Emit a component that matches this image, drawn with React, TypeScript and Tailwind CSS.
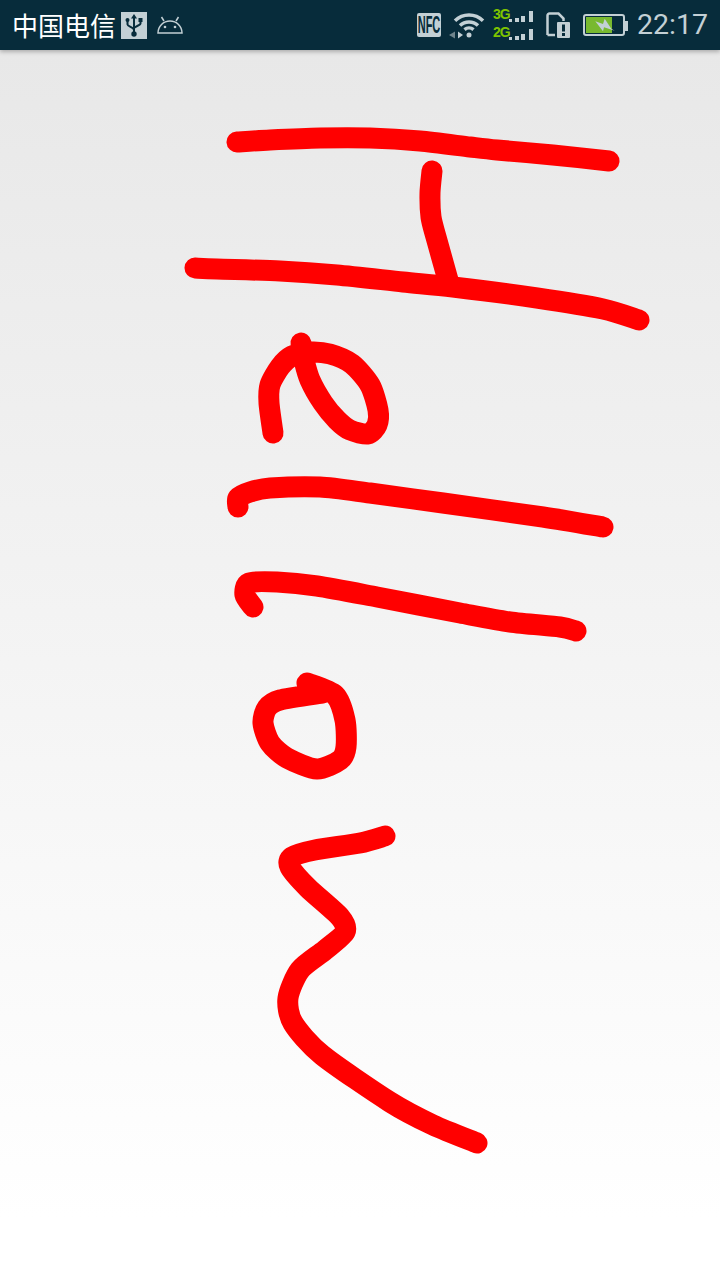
const strokes: number[][][] = [
  [[237, 142], [270, 140], [320, 138], [370, 138], [420, 141], [470, 147], [497, 150], [553, 155], [609, 161]],
  [[432, 171], [430, 193], [431, 217], [436, 237], [448, 280]],
  [[195, 268], [217, 269], [280, 271], [337, 275], [403, 282], [453, 287], [537, 298], [603, 309], [639, 320]],
  [[273, 433], [269, 403], [270, 385], [280, 367], [292, 356], [310, 352], [330, 354], [352, 364], [370, 385], [378, 410], [377, 425], [368, 434], [350, 430], [337, 420], [323, 403], [310, 380], [304, 360], [301, 343]],
  [[238, 507], [238, 498], [250, 492], [270, 488], [320, 487], [370, 493], [443, 503], [543, 517], [603, 527]],
  [[253, 607], [245, 595], [249, 583], [277, 582], [317, 586], [377, 597], [460, 613], [510, 622], [560, 627], [576, 631]],
  [[307, 683], [335, 695], [345, 720], [346, 747], [340, 760], [317, 769], [287, 758], [270, 743], [263, 723], [267, 708], [280, 700], [323, 693]],
  [[385, 836], [360, 843], [315, 850], [292, 857], [290, 867], [308, 888], [340, 917], [345, 932], [325, 950], [300, 970], [288, 998], [293, 1023], [322, 1055], [390, 1102], [433, 1125], [477, 1143]],
];

// catmull-rom through the finger samples, a bit tighter so corners don't overshoot
function smooth(pts: number[][]) {
  const k = 0.13;
  let d = `M${pts[0][0]} ${pts[0][1]}`;
  for (let i = 0; i < pts.length - 1; i++) {
    const p0 = pts[i - 1] ?? pts[i];
    const p1 = pts[i];
    const p2 = pts[i + 1];
    const p3 = pts[i + 2] ?? p2;
    const c1x = p1[0] + (p2[0] - p0[0]) * k;
    const c1y = p1[1] + (p2[1] - p0[1]) * k;
    const c2x = p2[0] - (p3[0] - p1[0]) * k;
    const c2y = p2[1] - (p3[1] - p1[1]) * k;
    d += `C${c1x} ${c1y} ${c2x} ${c2y} ${p2[0]} ${p2[1]}`;
  }
  return d;
}

function StatusIcons() {
  return (
    <div className="flex items-center h-full">
      {/* NFC */}
      <div className="w-[24px] h-[24px] bg-[#c3d0d5] rounded-[2px] flex items-center justify-center">
        <span className="text-[#072c3b] text-[11px] font-bold leading-none scale-y-[2.1] font-['Liberation_Sans',sans-serif]">NFC</span>
      </div>
      {/* wifi */}
      <svg className="ml-[8px]" width="40" height="28" viewBox="0 0 40 28" fill="none">
        <path d="M0 24l6-3.500v7z" fill="#6f848c" />
        <path d="M9 20.500l5 3.500-5 3.500z" fill="#c3d0d5" />
        <path d="M6 9.700A20 20 0 0 1 34 9.700" stroke="#c3d0d5" strokeWidth="3.500" />
        <path d="M11 14.600A13 13 0 0 1 29 14.600" stroke="#c3d0d5" strokeWidth="3.500" />
        <path d="M15.500 18.600A7 7 0 0 1 24.500 18.600" stroke="#c3d0d5" strokeWidth="3.500" />
        <circle cx="20" cy="24" r="2.500" fill="#c3d0d5" />
      </svg>
      {/* dual sim signal */}
      <div className="ml-[4px] flex flex-col gap-[1px] w-[40px] font-['Liberation_Sans',sans-serif]">
        {["3G", "2G"].map((label) => (
          <div key={label} className="flex items-end h-[17px]">
            <span className="shrink-0 -mt-[1px] text-[#7fc400] text-[14px] font-bold leading-[14px] tracking-[-1px] w-[16px] self-start">{label}</span>
            <div className="flex items-end gap-[2px] pb-[3px]">
              <span className="w-[3px] h-[3px] bg-[#c3d0d5]" />
              <span className="w-[4px] h-[4px] bg-[#c3d0d5] ml-[1px]" />
              <span className="w-[4px] h-[6px] bg-[#c3d0d5]" />
              <span className="w-[4px] h-[11px] bg-[#c3d0d5] ml-[2px]" />
            </div>
          </div>
        ))}
      </div>
      {/* sim warning */}
      <svg className="ml-[13px]" width="24" height="26" viewBox="0 0 24 26" fill="none">
        <path d="M1.500 23V3.500a2 2 0 0 1 2-2h9l5 5V9" stroke="#c3d0d5" strokeWidth="2.500" />
        <path d="M1.500 23H9" stroke="#c3d0d5" strokeWidth="2.500" />
        <rect x="11" y="10" width="13" height="16" rx="1" fill="#c3d0d5" />
        <rect x="16" y="12.500" width="3" height="7" fill="#072c3b" />
        <rect x="16" y="21" width="3" height="3" fill="#072c3b" />
      </svg>
      {/* battery */}
      <svg className="ml-[13px]" width="45" height="22" viewBox="0 0 45 22" fill="none">
        <rect x="1" y="1" width="40" height="20" rx="2" stroke="#c3d0d5" strokeWidth="2" />
        <rect x="42" y="7" width="3" height="10" fill="#c3d0d5" />
        <rect x="3" y="3" width="26" height="16" fill="#78b92f" />
        <path d="M12.300 7.300L20 10l1.700-5.300 6.600 10 3.400 2-10.700-3.400-1 4z" fill="#c3d0d5" />
      </svg>
      <span className="ml-[9px] text-[#c3d0d5] text-[28.5px] leading-none font-['Roboto',sans-serif]">22:17</span>
    </div>
  );
}

export default function App() {
  return (
    <div className="w-[720px] h-[1280px] flex flex-col overflow-hidden bg-white">
      {/* status bar */}
      <div className="relative z-10 h-[50px] shrink-0 bg-[#072c3b] shadow-[0_2px_4px_rgba(0,0,0,0.25)] flex items-center justify-between pl-[12px] pr-[12px]">
        <div className="flex items-center">
          <span className="text-white text-[26px] leading-none font-['Noto_Sans_CJK_SC',sans-serif]">中国电信</span>
          <div className="ml-[5px] w-[26px] h-[27px] bg-[#c3d0d5] flex items-center justify-center">
            <svg width="20" height="23" viewBox="0 0 20 23" fill="none">
              <path d="M10 0l-3 4.500h6z" fill="#072c3b" />
              <path d="M10 3v16" stroke="#072c3b" strokeWidth="2" />
              <path d="M3.500 7v3.500c0 2 6.500 3 6.500 5.500M16.500 7v2.500c0 2-6.500 3-6.500 5" stroke="#072c3b" strokeWidth="2" />
              <circle cx="3.500" cy="6" r="2" fill="#072c3b" />
              <rect x="14.500" y="4" width="4" height="4" fill="#072c3b" />
              <circle cx="10" cy="20" r="2.700" fill="#072c3b" />
            </svg>
          </div>
          <svg className="ml-[10px]" width="26" height="18" viewBox="0 0 26 18" fill="none">
            <path d="M1 17a12 12 0 0 1 24 0z" stroke="#c3d0d5" strokeWidth="1.500" />
            <path d="M7 5L4.500 1M19 5l2.500-4" stroke="#c3d0d5" strokeWidth="1.500" />
            <circle cx="8" cy="11" r="1.300" fill="#c3d0d5" />
            <circle cx="18" cy="11" r="1.300" fill="#c3d0d5" />
          </svg>
        </div>
        <StatusIcons />
      </div>

      {/* drawing canvas */}
      <div className="flex-1 bg-gradient-to-b from-[#e8e8e8] to-white to-[95%]">
        <svg className="block" width="720" height="1230" viewBox="0 50 720 1230" fill="none">
          {strokes.map((pts, i) => (
            <path key={i} d={smooth(pts)} stroke="#ff0000" strokeWidth="21" strokeLinecap="round" strokeLinejoin="round" />
          ))}
        </svg>
      </div>
    </div>
  );
}
